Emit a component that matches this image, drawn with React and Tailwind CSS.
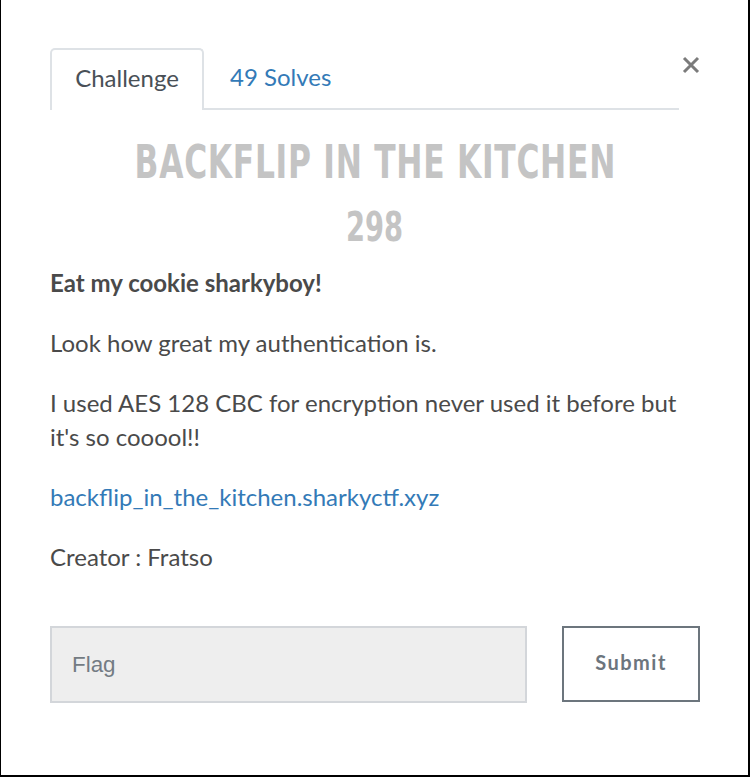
export default function App() {
  return (
    <div className="min-h-screen bg-black">
      <div
        className="relative ml-px h-[775px] w-[747px] bg-white pl-[49px] pt-[48px]"
        style={{ fontFamily: "Lato, 'Noto Sans', sans-serif" }}
      >
        <button className="absolute left-[681px] top-[56px] flex h-[18px] w-[18px] items-center justify-center">
          <svg width="18" height="18" viewBox="0 0 18 18">
            <path d="M2 2 L16 16 M16 2 L2 16" stroke="#7b7b7b" strokeWidth="3" strokeLinecap="butt" />
          </svg>
        </button>

        <div className="flex h-[62px] w-[629px] border-b-2 border-[#dee2e6]">
          <div className="-mb-[2px] flex h-[62px] w-[154px] items-center justify-center rounded-t-[5px] border-2 border-b-0 border-[#dee2e6] bg-white pb-[4px] text-[24px] text-[#495057]">
            Challenge
          </div>
          <div className="flex h-[60px] items-center pb-[2px] pl-[26px] text-[24px] text-[#337ab7]">
            49 Solves
          </div>
        </div>

        <div className="w-[650px] text-center text-[#c4c4c4]">
          <div
            className="mt-[28px] h-[48px] whitespace-nowrap text-[47px] font-bold leading-[48px] tracking-[1px]"
            style={{ fontFamily: "'DejaVu Sans Condensed', 'DejaVu Sans', sans-serif" }}
          >
            <span className="inline-block scale-x-[0.74]">BACKFLIP IN THE KITCHEN</span>
          </div>
          <div
            className="mt-[20px] h-[42px] whitespace-nowrap text-[40px] font-bold leading-[42px]"
            style={{ fontFamily: "'DejaVu Sans Condensed', 'DejaVu Sans', sans-serif" }}
          >
            <span className="inline-block scale-x-[0.76]">298</span>
          </div>
        </div>

        <div className="mt-[18px] w-[650px] text-[24px] leading-[34px] text-[#4a4a4a]">
          <p className="mb-[26px] font-bold">Eat my cookie sharkyboy!</p>
          <p className="mb-[26px]">Look how great my authentication is.</p>
          <p className="mb-[26px]">
            I used AES 128 CBC for encryption never used it before but it's so cooool!!
          </p>
          <p className="mb-[26px] text-[#337ab7]">backflip_in_the_kitchen.sharkyctf.xyz</p>
          <p>Creator : Fratso</p>
        </div>

        <div className="mt-[52px] flex w-[650px] items-start">
          <div
            className="flex h-[77px] w-[477px] items-center border-2 border-[#d3d6da] bg-[#eeeeee] pl-[20px] text-[22.4px] text-[#737b83]"
            style={{ fontFamily: "'Liberation Sans', Arial, sans-serif" }}
          >
            Flag
          </div>
          <button className="ml-auto flex h-[76px] w-[138px] items-center justify-center border-2 border-[#6c757d] pb-[4px] text-[20px] font-bold tracking-[1.5px] text-[#6c757d]">
            Submit
          </button>
        </div>
      </div>
    </div>
  );
}
